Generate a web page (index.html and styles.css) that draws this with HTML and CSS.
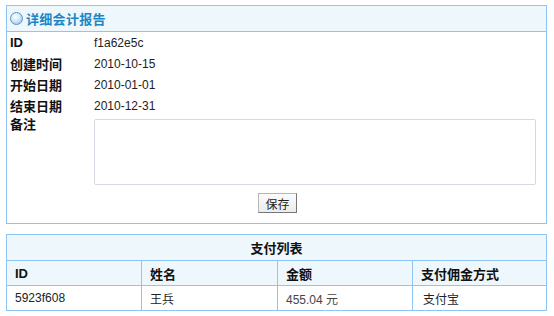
FILE: index.html
```html
<!DOCTYPE html>
<html>
<head>
<meta charset="utf-8">
<link rel="stylesheet" href="styles.css">
</head>
<body>
<div class="panel">
  <div class="panel-head">
    <span class="orb"></span>
    <span class="title">详细会计报告</span>
  </div>
  <div class="panel-body">
    <div class="row"><span class="lbl">ID</span><span class="val">f1a62e5c</span></div>
    <div class="row"><span class="lbl">创建时间</span><span class="val">2010-10-15</span></div>
    <div class="row"><span class="lbl">开始日期</span><span class="val">2010-01-01</span></div>
    <div class="row"><span class="lbl">结束日期</span><span class="val">2010-12-31</span></div>
    <div class="row row-note"><span class="lbl">备注</span><textarea class="note"></textarea></div>
    <div class="actions"><button class="btn">保存</button></div>
  </div>
</div>

<table class="pay">
  <tr><th class="cap" colspan="4">支付列表</th></tr>
  <tr class="hdr"><th>ID</th><th>姓名</th><th>金额</th><th>支付佣金方式</th></tr>
  <tr><td>5923f608</td><td>王兵</td><td class="amt">455.04 元</td><td class="way">支付宝</td></tr>
</table>
</body>
</html>
```

FILE: styles.css
```css
html, body {
  margin: 0;
  padding: 0;
  background: #fff;
}
body {
  padding: 5px 8px 0 6px;
  font-family: "Liberation Sans", "Noto Sans CJK SC", Arial, sans-serif;
  font-size: 12px;
  color: #222;
}
.panel {
  width: 539px;
  border: 1px solid #8ec5f5;
}
.panel-head {
  height: 25px;
  background: #eef7fc;
  border-bottom: 1px solid #8ec5f5;
  display: flex;
  align-items: center;
  padding-left: 3px;
}
.orb {
  width: 11px;
  height: 11px;
  border-radius: 50%;
  border: 1px solid #5b93c7;
  background: radial-gradient(circle at 40% 35%, #ffffff 0%, #d6ebfb 40%, #8fbde6 100%);
  margin-right: 3px;
}
.title {
  font-family: "Noto Sans CJK SC", sans-serif;
  font-weight: bold;
  font-size: 13px;
  color: #1c86c6;
  letter-spacing: 0.3px;
}
.panel-body {
  padding: 0 9px 10px 3px;
}
.row {
  display: flex;
  height: 21px;
  align-items: center;
}
.lbl {
  width: 84px;
  font-weight: bold;
  font-size: 13px;
  font-family: "Liberation Sans", "Noto Sans CJK SC", sans-serif;
  color: #111;
}
.val {
  color: #222;
}
.row-note {
  height: auto;
  align-items: flex-start;
  margin-top: 1px;
}
.row-note .lbl {
  line-height: 16px;
}
.note {
  width: 440px;
  height: 64px;
  margin: 2px 0 0 0;
  padding: 0;
  border: 1px solid #d4d9e2;
  border-radius: 2px;
  resize: none;
  background: #fff;
}
.actions {
  display: flex;
  justify-content: center;
  padding-top: 8px;
  padding-left: 8px;
}
.btn {
  width: 39px;
  height: 20px;
  padding: 0;
  font-family: "Noto Sans CJK SC", sans-serif;
  font-size: 12px;
  color: #222;
  background: linear-gradient(#fbfbfb, #ececec);
  border: 1px solid #b5b5b5;
  border-right-color: #777;
  border-bottom-color: #777;
}
.pay {
  margin-top: 10px;
  width: 541px;
  border-collapse: collapse;
  border: 1px solid #8ec5f5;
}
.pay th, .pay td {
  border: 1px solid #8ec5f5;
  height: 24px;
  padding: 0 8px;
  text-align: left;
  font-size: 12px;
}
.pay th {
  background: #eef7fc;
  font-weight: bold;
  font-size: 13px;
  color: #111;
  font-family: "Liberation Sans", "Noto Sans CJK SC", sans-serif;
}
.pay th.cap {
  text-align: center;
  height: 25px;
}
.pay tr.hdr th:nth-child(1) { width: 118px; }
.pay tr.hdr th:nth-child(2) { width: 119px; }
.pay tr.hdr th:nth-child(3) { width: 118px; }
.pay td {
  color: #222;
}
.pay td.amt {
  color: #444;
}
.pay td.way {
  padding-left: 10px;
}
```
